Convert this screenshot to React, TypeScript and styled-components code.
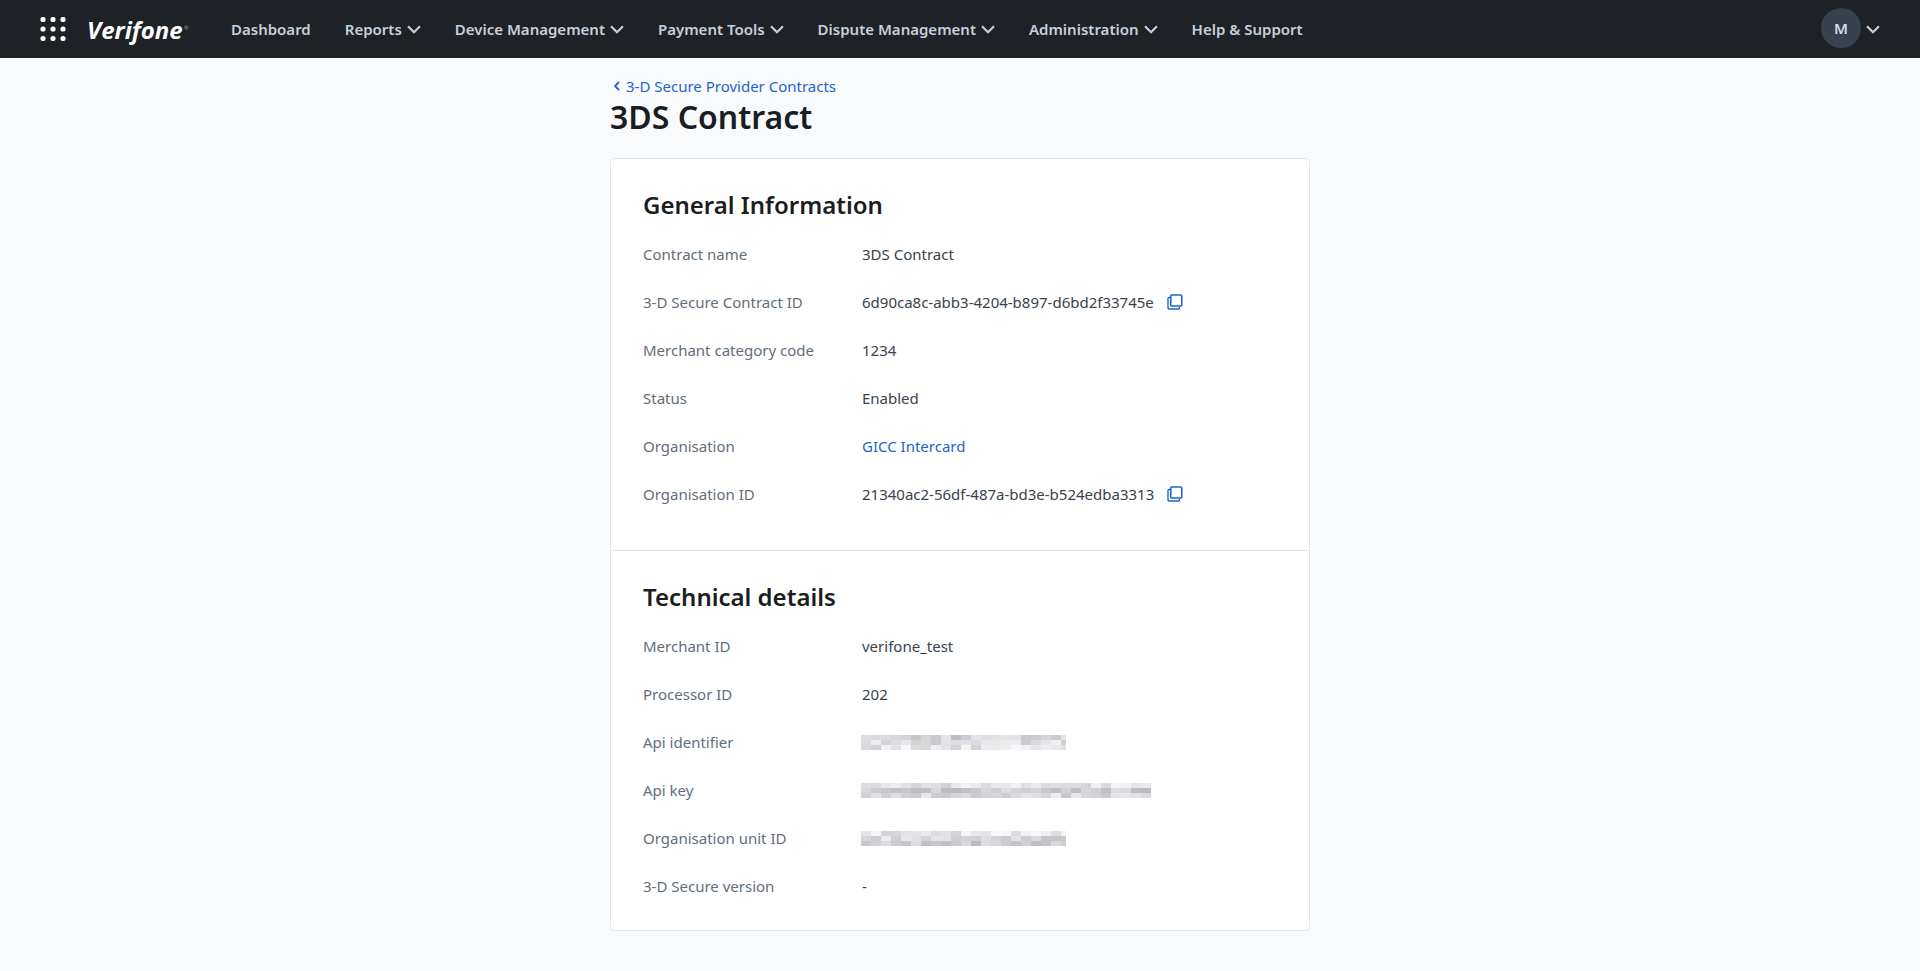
import React from 'react';
import styled, { createGlobalStyle } from 'styled-components';

const GlobalStyle = createGlobalStyle`
  html, body {
    margin: 0;
    padding: 0;
    background: #f9fafc;
    font-family: "Noto Sans", "Open Sans", sans-serif;
    font-size: 15px;
  }
`;

const Header = styled.header`
  height: 58px;
  background: #1e2126;
  display: flex;
  align-items: center;
  padding: 0 40px;
  color: #c6d0da;
`;

const Logo = styled.span`
  margin-left: 21px;
  width: 109px;
  display: flex;
  font-family: "Open Sans", sans-serif;
  font-size: 24px;
  font-weight: 700;
  font-style: italic;
  color: #fff;
`;

const LogoMark = styled.sup`
  font-size: 6px;
  font-style: normal;
  font-weight: 400;
  line-height: 30px;
  margin-left: 1px;
  color: #8f959b;
`;

const Nav = styled.nav`
  display: flex;
  align-items: center;
  margin-left: 35px;
  gap: 34px;
  flex: 1;
`;

const NavItem = styled.a<{ $menu?: boolean }>`
  display: flex;
  align-items: center;
  gap: 5px;
  font-weight: 600;
  line-height: 20px;
  margin-top: ${p => (p.$menu ? 0 : -1)}px;
`;

const Avatar = styled.div`
  width: 40px;
  height: 40px;
  border-radius: 50%;
  background: #36424e;
  color: #d5dde4;
  font-weight: 600;
  display: flex;
  align-items: center;
  justify-content: center;
  margin-top: -2px;
`;

const UserMenu = styled.div`
  display: flex;
  align-items: center;
  gap: 5px;
`;

const Main = styled.main`
  width: 700px;
  margin: 0 auto;
  padding: 17px 0 0;
`;

const BackLink = styled.a`
  display: flex;
  align-items: center;
  gap: 6px;
  padding-left: 4px;
  height: 21px;
  margin-bottom: 2px;
  color: #1e64c8;
`;

const Title = styled.h1`
  margin: 0 0 22px;
  font-size: 32px;
  line-height: 38px;
  font-weight: 600;
  color: #1a1d21;
`;

const Card = styled.div`
  background: #fff;
  border: 1px solid #e2e6ea;
  border-radius: 4px;
`;

const Section = styled.section`
  padding: 30px 32px 32px;
  & + & {
    border-top: 1px solid #e2e6ea;
    padding-bottom: 20px;
  }
`;

const SectionTitle = styled.h2`
  margin: 0 0 9px;
  font-size: 24px;
  line-height: 32px;
  font-weight: 600;
  color: #1a1d21;
`;

const Row = styled.div`
  display: grid;
  grid-template-columns: 219px 1fr;
  align-items: center;
  height: 48px;
`;

const Label = styled.span`
  color: #5f6e7b;
`;

const Value = styled.span`
  display: flex;
  align-items: center;
  gap: 13px;
  color: #38434e;
`;

const ValueLink = styled.a`
  color: #1e64c8;
`;

const Redacted = styled.div`
  display: flex;
  flex-direction: column;
  margin-left: -1px;
`;

const RedactedRow = styled.div`
  display: flex;
`;

const RedactedCell = styled.i<{ $shade: number; $tint: number }>`
  width: 5px;
  height: 5px;
  background: ${p => `rgb(${p.$shade + p.$tint}, ${p.$shade}, ${p.$shade - p.$tint + 4})`};
`;

const Chevron = () => (
  <svg width="14" height="9" viewBox="0 0 14 9" fill="none" stroke="currentColor" strokeWidth="2.2">
    <path d="M1 1.2L7 7.2L13 1.2" />
  </svg>
);

const BackChevron = () => (
  <svg width="6" height="10" viewBox="0 0 6 10" fill="none" stroke="currentColor" strokeWidth="1.8">
    <path d="M5 1L1 5L5 9" />
  </svg>
);

const CopyIcon = () => (
  <svg width="16" height="16" viewBox="0 0 16 16" fill="none" stroke="#1a66c9">
    <rect x="3.75" y="1" width="11" height="11" rx="1" strokeWidth="1.6" />
    <path d="M3.5 3.5H2a1 1 0 0 0-1 1V14a1 1 0 0 0 1 1h9.5a1 1 0 0 0 1-1v-1.5" strokeWidth="1.4" />
  </svg>
);

const GridIcon = () => (
  <svg width="26" height="24" viewBox="0 0 26 24" fill="#fff">
    {[3, 13, 23].map(cx =>
      [2.5, 12, 21.5].map(cy => <circle key={`${cx}-${cy}`} cx={cx} cy={cy} r="2.6" />)
    )}
  </svg>
);

const noise = (a: number, b: number, c: number) => {
  const n = Math.sin(a * 12.9 + b * 78.2 + c * 37.7) * 43758.5;
  return n - Math.floor(n);
};

// pixelated block standing in for a value hidden in the screenshot
const Blur = ({ seed, cols, bases }: { seed: number; cols: number; bases: number[] }) => (
  <Redacted>
    {bases.map((base, r) => (
      <RedactedRow key={r}>
        {Array.from({ length: cols }, (_, c) => {
          // neighbouring cells share a value so the blocks read as coarse as the original
          const cell = Math.floor(c / 2);
          return (
            <RedactedCell
              key={c}
              $shade={Math.min(250, Math.round(base + noise(seed, cell, r) * 40))}
              $tint={Math.round((noise(seed + 5, cell, r) - 0.5) * 6)}
            />
          );
        })}
      </RedactedRow>
    ))}
  </Redacted>
);

const navItems = [
  { label: 'Dashboard' },
  { label: 'Reports', menu: true },
  { label: 'Device Management', menu: true },
  { label: 'Payment Tools', menu: true },
  { label: 'Dispute Management', menu: true },
  { label: 'Administration', menu: true },
  { label: 'Help & Support' },
];

export default function App() {
  return (
    <>
      <GlobalStyle />
      <Header>
        <GridIcon />
        <Logo>Verifone<LogoMark>®</LogoMark></Logo>
        <Nav>
          {navItems.map(item => (
            <NavItem key={item.label} $menu={item.menu}>
              {item.label}
              {item.menu && <Chevron />}
            </NavItem>
          ))}
        </Nav>
        <UserMenu>
          <Avatar>M</Avatar>
          <Chevron />
        </UserMenu>
      </Header>
      <Main>
        <BackLink>
          <BackChevron />
          3-D Secure Provider Contracts
        </BackLink>
        <Title>3DS Contract</Title>
        <Card>
          <Section>
            <SectionTitle>General Information</SectionTitle>
            <Row><Label>Contract name</Label><Value>3DS Contract</Value></Row>
            <Row><Label>3-D Secure Contract ID</Label><Value>6d90ca8c-abb3-4204-b897-d6bd2f33745e <CopyIcon /></Value></Row>
            <Row><Label>Merchant category code</Label><Value>1234</Value></Row>
            <Row><Label>Status</Label><Value>Enabled</Value></Row>
            <Row><Label>Organisation</Label><Value><ValueLink>GICC Intercard</ValueLink></Value></Row>
            <Row><Label>Organisation ID</Label><Value>21340ac2-56df-487a-bd3e-b524edba3313 <CopyIcon /></Value></Row>
          </Section>
          <Section>
            <SectionTitle>Technical details</SectionTitle>
            <Row><Label>Merchant ID</Label><Value>verifone_test</Value></Row>
            <Row><Label>Processor ID</Label><Value>202</Value></Row>
            <Row><Label>Api identifier</Label><Value><Blur seed={1} cols={41} bases={[190, 200, 208]} /></Value></Row>
            <Row><Label>Api key</Label><Value><Blur seed={2} cols={58} bases={[208, 184, 196]} /></Value></Row>
            <Row><Label>Organisation unit ID</Label><Value><Blur seed={3} cols={41} bases={[208, 196, 186]} /></Value></Row>
            <Row><Label>3-D Secure version</Label><Value>-</Value></Row>
          </Section>
        </Card>
      </Main>
    </>
  );
}
